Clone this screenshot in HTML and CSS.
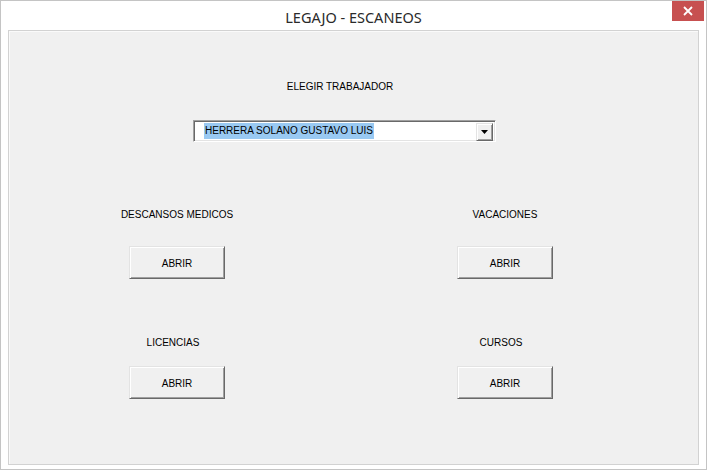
FILE: index.html
```html
<!DOCTYPE html>
<html>
<head>
<meta charset="utf-8">
<link rel="stylesheet" href="styles.css">
</head>
<body>
<div class="window">
  <div class="titlebar">
    <div class="spacer"></div>
    <div class="title">LEGAJO - ESCANEOS</div>
    <div class="controls">
      <div class="close">
        <svg width="10" height="10" viewBox="0 0 10 10"><path d="M1 1 L9 9 M9 1 L1 9" stroke="#fff" stroke-width="1.8" fill="none"/></svg>
      </div>
    </div>
  </div>
  <div class="panel">
    <div class="picker">
      <div class="label picker-label">ELEGIR TRABAJADOR</div>
      <div class="combo">
        <div class="combo-text"><span class="sel">HERRERA SOLANO GUSTAVO LUIS</span></div>
        <div class="combo-btn">
          <svg width="7" height="4" viewBox="0 0 7 4"><path d="M0 0 H7 L3.5 4 Z" fill="#000"/></svg>
        </div>
      </div>
    </div>
    <div class="grid">
      <div class="cell row1">
        <div class="label">DESCANSOS MEDICOS</div>
        <div class="btn">ABRIR</div>
      </div>
      <div class="cell row1">
        <div class="label">VACACIONES</div>
        <div class="btn">ABRIR</div>
      </div>
      <div class="cell row2">
        <div class="label nudge-l">LICENCIAS</div>
        <div class="btn">ABRIR</div>
      </div>
      <div class="cell row2">
        <div class="label nudge-l">CURSOS</div>
        <div class="btn">ABRIR</div>
      </div>
    </div>
  </div>
</div>
</body>
</html>
```
FILE: styles.css
```css
* { box-sizing: border-box; }
html, body { margin: 0; padding: 0; background: #fff; }
.window {
  width: 707px;
  height: 470px;
  background: #fff;
  border: 1px solid #c4c4c4;
  display: flex;
  flex-direction: column;
}
.titlebar {
  height: 29px;
  display: grid;
  grid-template-columns: 1fr auto 1fr;
  align-items: start;
}
.title {
  font-family: "Noto Sans", "Open Sans", sans-serif;
  font-size: 14.5px;
  color: #2a2a2a;
  line-height: 30px;
  padding-top: 1px;
}
.controls { display: flex; justify-content: flex-end; padding-right: 2px; }
.close {
  width: 32px;
  height: 20px;
  background: #c75050;
  display: flex;
  align-items: center;
  justify-content: center;
}
.panel {
  flex: 1;
  margin: 0 7px 4px 7px;
  background: #f0f0f0;
  border: 1px solid #d2d2d2;
  box-shadow: inset 1px 1px 0 #fafafa;
  font-family: "Liberation Sans", Arial, sans-serif;
  font-size: 10px;
  color: #000;
}
.label { line-height: 13px; text-align: center; white-space: nowrap; padding-top: 1px; }
.picker {
  width: 303px;
  margin-left: 184px;
  padding-top: 48px;
}
.picker-label { padding-right: 9px; }
.combo {
  margin-top: 27px;
  height: 22px;
  background: #fff;
  border: 1px solid;
  border-color: #a0a0a0 #fff #fff #a0a0a0;
  box-shadow: inset 1px 1px 0 #696969, inset -1px -1px 0 #e3e3e3;
  display: flex;
  padding: 2px 2px 2px 10px;
}
.combo-text { flex: 1; display: flex; align-items: stretch; }
.sel {
  background: #99c9f2;
  padding: 0 1px;
  line-height: 16px;
  font-size: 10px;
}
.combo-btn {
  width: 17px;
  height: 18px;
  background: #f0f0f0;
  border: 1px solid;
  border-color: #e3e3e3 #696969 #696969 #e3e3e3;
  box-shadow: inset 1px 1px 0 #fff, inset -1px -1px 0 #a0a0a0;
  display: flex;
  align-items: center;
  justify-content: center;
}
.grid {
  display: grid;
  grid-template-columns: 134px 134px;
  column-gap: 194px;
  padding-left: 101px;
}
.cell { display: flex; flex-direction: column; align-items: center; }
.row1 { margin-top: 65px; }
.row1 .btn { margin-top: 25px; }
.row2 { margin-top: 56px; }
.row2 .btn { margin-top: 17px; }
.nudge-l { margin-right: 8px; }
.btn {
  width: 96px;
  height: 33px;
  background: #f0f0f0;
  border: 1px solid;
  border-color: #e3e3e3 #696969 #696969 #e3e3e3;
  box-shadow: inset 1px 1px 0 #fff, inset -1px -1px 0 #a0a0a0;
  display: flex;
  align-items: center;
  justify-content: center;
  line-height: 13px;
  padding-top: 1px;
}
```
